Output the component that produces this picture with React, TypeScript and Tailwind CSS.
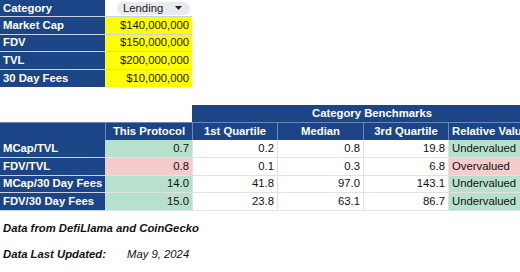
const navy = "bg-[#1c4587]";

const inputs = [
  { label: "Market Cap", value: "$140,000,000" },
  { label: "FDV", value: "$150,000,000" },
  { label: "TVL", value: "$200,000,000" },
  { label: "30 Day Fees", value: "$10,000,000" },
];

type Row = {
  label: string;
  mine: string;
  q1: string;
  median: string;
  q3: string;
  verdict: "Undervalued" | "Overvalued";
};

const rows: Row[] = [
  { label: "MCap/TVL", mine: "0.7", q1: "0.2", median: "0.8", q3: "19.8", verdict: "Undervalued" },
  { label: "FDV/TVL", mine: "0.8", q1: "0.1", median: "0.3", q3: "6.8", verdict: "Overvalued" },
  { label: "MCap/30 Day Fees", mine: "14.0", q1: "41.8", median: "97.0", q3: "143.1", verdict: "Undervalued" },
  { label: "FDV/30 Day Fees", mine: "15.0", q1: "23.8", median: "63.1", q3: "86.7", verdict: "Undervalued" },
];

function Caret() {
  return (
    <svg width="7" height="4" viewBox="0 0 7 4" className="ml-auto mr-[8px]">
      <path d="M0 0h7L3.5 4z" fill="#202124" />
    </svg>
  );
}

export default function App() {
  return (
    <div className="w-[520px] h-[272px] overflow-hidden bg-white text-[11.3px] text-[#111] font-['Liberation_Sans',Arial,sans-serif]">
      {/* inputs */}
      <div className="flex flex-col w-[192px]">
        <div className="flex h-[17px] border-b border-[#c8d2e4]">
          <div className={`${navy} w-[105px] pl-[3px] font-bold text-white flex items-center`}>Category</div>
          <div className="flex-1 bg-white flex items-center pl-[12px] pr-[2px]">
            <div className="flex items-center h-[13px] w-full rounded-full bg-[#e8eaed] pl-[6px] text-[#202124]">
              Lending
              <Caret />
            </div>
          </div>
        </div>
        {inputs.map((r, i) => (
          <div
            key={r.label}
            className={`flex h-[17.5px] ${i < inputs.length - 1 ? "border-b border-[#c8d2e4]" : ""}`}
          >
            <div className={`${navy} w-[105px] pl-[3px] font-bold text-white flex items-center`}>{r.label}</div>
            <div className="flex-1 bg-[#ffff00] flex items-center justify-end pr-[3px]">{r.value}</div>
          </div>
        ))}
      </div>

      {/* benchmarks */}
      <div className="mt-[18px] w-[552px]">
        <div className="flex h-[17px]">
          <div className="w-[192px]" />
          <div className={`${navy} w-[360px] flex items-center justify-center font-bold text-white`}>
            Category Benchmarks
          </div>
        </div>
        <div className={`${navy} flex h-[18px] border-t border-[#6f86b3] font-bold text-white`}>
          <div className="w-[105px]" />
          <div className="w-[87px] border-l border-[#6f86b3] flex items-center justify-center">This Protocol</div>
          <div className="w-[85px] border-l border-[#6f86b3] flex items-center justify-center">1st Quartile</div>
          <div className="w-[86px] border-l border-[#6f86b3] flex items-center justify-center">Median</div>
          <div className="w-[85px] border-l border-[#6f86b3] flex items-center justify-center">3rd Quartile</div>
          <div className="w-[104px] border-l border-[#6f86b3] flex items-center pl-[3px]">Relative Value</div>
        </div>
        {rows.map((r) => {
          const tint = r.verdict === "Undervalued" ? "bg-[#b7e1cd]" : "bg-[#f4cccc]";
          return (
            <div key={r.label} className="flex h-[17.75px] border-b border-[#e2e2e2]">
              <div className={`${navy} w-[105px] pl-[3px] font-bold text-white flex items-center border-b border-[#c8d2e4] -mb-px`}>
                {r.label}
              </div>
              <div className={`${tint} w-[87px] flex items-center justify-end pr-[3px]`}>{r.mine}</div>
              <div className="w-[85px] border-l border-[#e2e2e2] flex items-center justify-end pr-[3px]">{r.q1}</div>
              <div className="w-[86px] border-l border-[#e2e2e2] flex items-center justify-end pr-[3px]">{r.median}</div>
              <div className="w-[85px] border-l border-[#e2e2e2] flex items-center justify-end pr-[3px]">{r.q3}</div>
              <div className={`${tint} w-[104px] border-l border-[#e2e2e2] flex items-center pl-[3px]`}>{r.verdict}</div>
            </div>
          );
        })}
      </div>

      {/* notes */}
      <div className="mt-[11px] pl-[3px] italic leading-[13px]">
        <p className="font-bold">Data from DefiLlama and CoinGecko</p>
        <p className="mt-[13px] flex">
          <span className="font-bold w-[124px]">Data Last Updated:</span>
          <span>May 9, 2024</span>
        </p>
      </div>
    </div>
  );
}
